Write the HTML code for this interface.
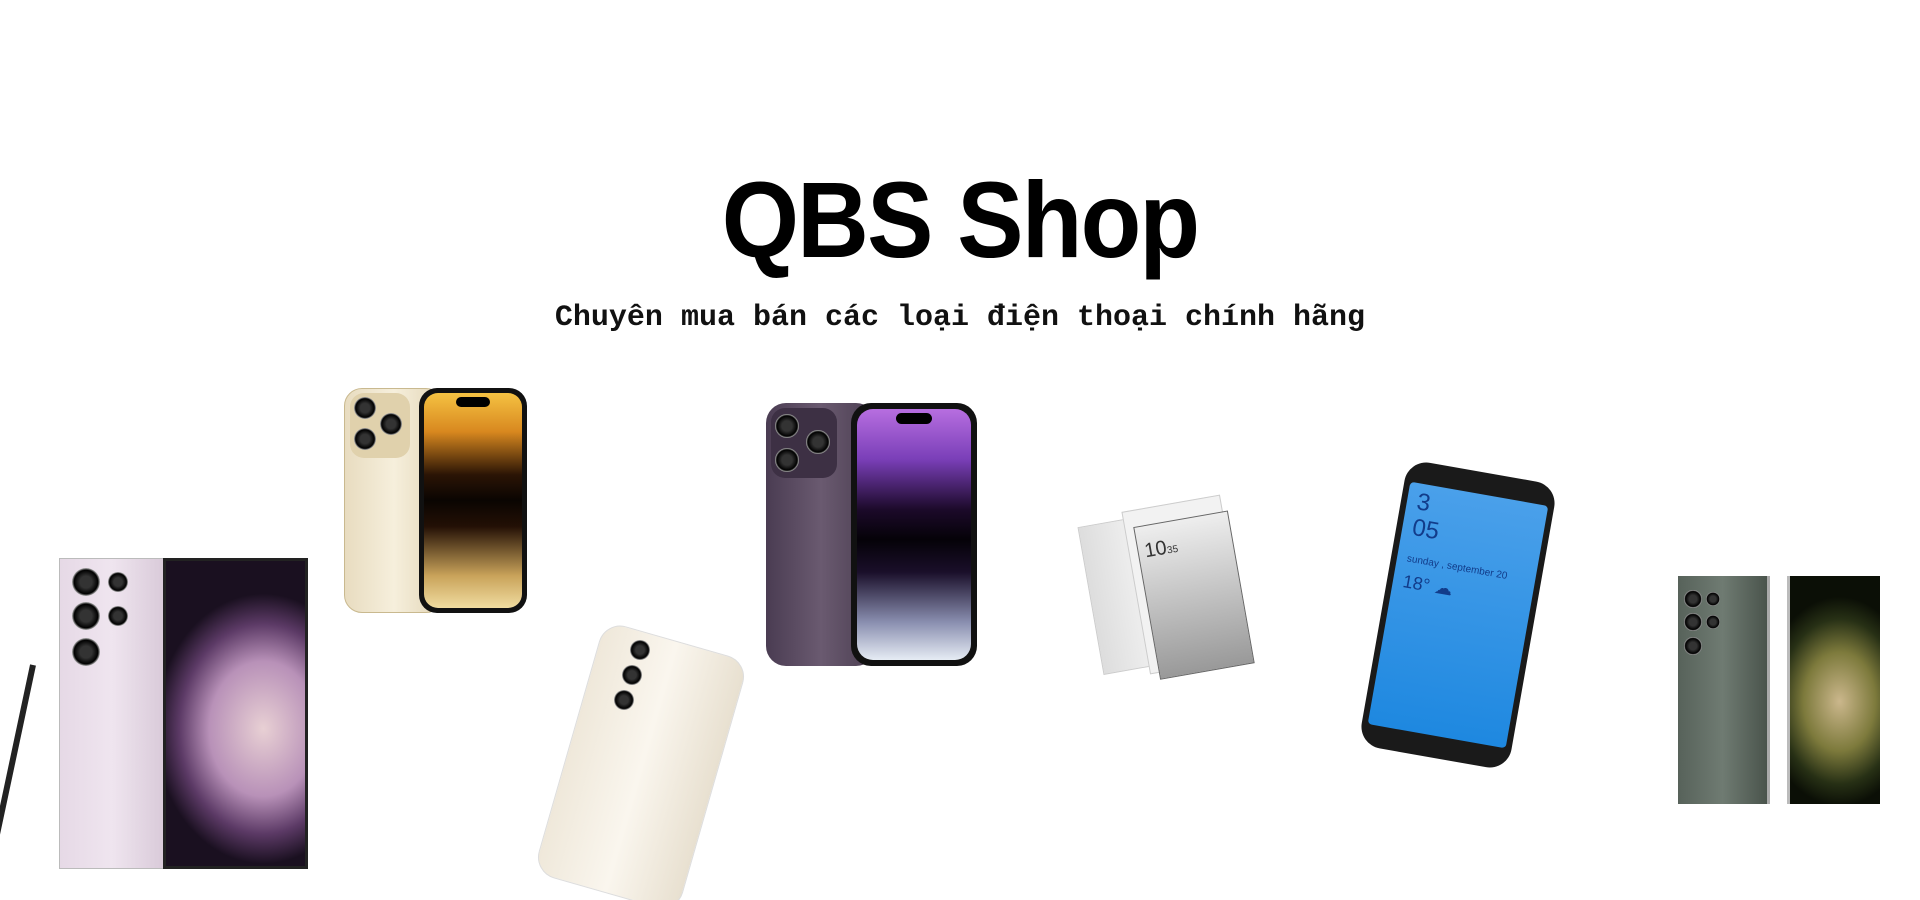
<!DOCTYPE html>
<html><head><meta charset="utf-8"><style>
html,body{margin:0;padding:0;background:#fff;width:1920px;height:900px;overflow:hidden;position:relative}
.a{position:absolute;box-sizing:border-box}
h1{position:absolute;left:0;width:1920px;top:166px;margin:0;text-align:center;font:700 108px/1 "Liberation Sans",sans-serif;color:#000;letter-spacing:-2px;transform:scaleX(0.92)}
.sub{position:absolute;left:0;width:1920px;top:300px;text-align:center;font:700 30px/1.2 "Liberation Mono",monospace;color:#111}
.cam{position:absolute;border-radius:50%;background:radial-gradient(circle,#333 30%,#000 60%,#aaa 70%,#222 80%)}
</style></head><body>
<h1>QBS Shop</h1>
<div class="sub">Chuyên mua bán các loại điện thoại chính hãng</div>

<!-- Samsung lavender -->
<div class="a" style="left:59px;top:558px;width:106px;height:311px;background:linear-gradient(90deg,#e6d9e6,#efe5ef,#d9cad9);border:1px solid #bbb"></div>
<div class="cam" style="left:72px;top:568px;width:28px;height:28px"></div>
<div class="cam" style="left:108px;top:572px;width:20px;height:20px"></div>
<div class="cam" style="left:72px;top:602px;width:28px;height:28px"></div>
<div class="cam" style="left:108px;top:606px;width:20px;height:20px"></div>
<div class="cam" style="left:72px;top:638px;width:28px;height:28px"></div>
<div class="a" style="left:163px;top:558px;width:145px;height:311px;background:radial-gradient(ellipse 120px 150px at 70% 55%,#e8d0d4 0%,#b891b8 45%,#5c3a66 70%,#1a1020 90%);border:3px solid #222"></div>
<div class="a" style="left:30px;top:665px;width:6px;height:200px;background:#222;transform:rotate(12deg);transform-origin:top"></div>

<!-- iPhone gold -->
<div class="a" style="left:344px;top:388px;width:100px;height:225px;background:linear-gradient(90deg,#e8dcc0,#f6efdc,#e2d5b6);border-radius:18px;border:1px solid #c9b98f"></div>
<div class="a" style="left:350px;top:393px;width:60px;height:65px;background:#e0d1ac;border-radius:14px"></div>
<div class="cam" style="left:354px;top:397px;width:22px;height:22px"></div>
<div class="cam" style="left:380px;top:413px;width:22px;height:22px"></div>
<div class="cam" style="left:354px;top:428px;width:22px;height:22px"></div>
<div class="a" style="left:419px;top:388px;width:108px;height:225px;background:#111;border-radius:18px;padding:5px"><div style="width:100%;height:100%;border-radius:14px;background:linear-gradient(180deg,#f5c242 0%,#d8881f 18%,#2b1405 38%,#0a0502 50%,#231005 62%,#c9a35a 85%,#f0dca0 100%)"></div></div>
<div class="a" style="left:456px;top:397px;width:34px;height:10px;background:#000;border-radius:5px"></div>

<!-- Samsung cream tilted -->
<div class="a" style="left:566px;top:636px;width:150px;height:262px;background:linear-gradient(90deg,#efe8da,#faf6ee,#e8e0d0);border-radius:22px;border:1px solid #ddd;transform:rotate(16deg);transform-origin:center"></div>
<div class="cam" style="left:630px;top:640px;width:20px;height:20px"></div>
<div class="cam" style="left:622px;top:665px;width:20px;height:20px"></div>
<div class="cam" style="left:614px;top:690px;width:20px;height:20px"></div>

<!-- iPhone purple -->
<div class="a" style="left:766px;top:403px;width:110px;height:263px;background:linear-gradient(90deg,#4a3c52,#6a5a70,#4a3d50);border-radius:20px"></div>
<div class="a" style="left:771px;top:408px;width:66px;height:70px;background:#3d3044;border-radius:14px"></div>
<div class="cam" style="left:775px;top:414px;width:24px;height:24px"></div>
<div class="cam" style="left:806px;top:430px;width:24px;height:24px"></div>
<div class="cam" style="left:775px;top:448px;width:24px;height:24px"></div>
<div class="a" style="left:851px;top:403px;width:126px;height:263px;background:#111;border-radius:20px;padding:6px"><div style="width:100%;height:100%;border-radius:16px;background:linear-gradient(180deg,#b76ee0 0%,#7a3fb8 20%,#1c0a2a 40%,#050208 52%,#1a0f2a 65%,#8a8fb0 85%,#e6ecf4 100%)"></div></div>
<div class="a" style="left:896px;top:413px;width:36px;height:11px;background:#000;border-radius:6px"></div>

<!-- Sony white -->
<div class="a" style="left:1090px;top:520px;width:70px;height:150px;background:linear-gradient(90deg,#ddd,#f5f5f5);transform:rotate(-10deg);border:1px solid #ccc"></div>
<div class="a" style="left:1135px;top:502px;width:100px;height:165px;background:#f2f2f2;transform:rotate(-10deg);border:1px solid #ccc;padding:16px 8px 22px"><div style="width:100%;height:100%;background:linear-gradient(180deg,#eee,#ccc 40%,#999);border:1px solid #666;font:20px 'Liberation Sans',sans-serif;color:#333;padding:14px 6px">10<span style="font-size:10px">35</span></div></div>

<!-- Blue phone -->
<div class="a" style="left:1382px;top:470px;width:152px;height:290px;background:#1a1a1a;border-radius:22px;transform:rotate(10deg);padding:22px 6px"><div style="width:100%;height:100%;background:linear-gradient(180deg,#4aa0ea,#1e88e0);border-radius:4px;font:24px 'Liberation Sans',sans-serif;color:#123c8a;padding:6px 10px;box-sizing:border-box;line-height:1.1">3<br>05<br><span style="font-size:10px">sunday , september 20</span><br><span style="font-size:18px">18° ☁</span></div></div>

<!-- Green samsung -->
<div class="a" style="left:1678px;top:576px;width:92px;height:228px;background:linear-gradient(90deg,#57625a,#6f7b72,#4a544c);border-right:3px solid #aaa"></div>
<div class="cam" style="left:1684px;top:590px;width:18px;height:18px"></div>
<div class="cam" style="left:1706px;top:592px;width:14px;height:14px"></div>
<div class="cam" style="left:1684px;top:613px;width:18px;height:18px"></div>
<div class="cam" style="left:1706px;top:615px;width:14px;height:14px"></div>
<div class="cam" style="left:1684px;top:637px;width:18px;height:18px"></div>
<div class="a" style="left:1787px;top:576px;width:93px;height:228px;background:radial-gradient(ellipse 80px 110px at 55% 55%,#cbb78c 0%,#7d7a3c 45%,#273015 75%,#0b0f06 95%);border-left:3px solid #bbb"></div>
</body></html>
